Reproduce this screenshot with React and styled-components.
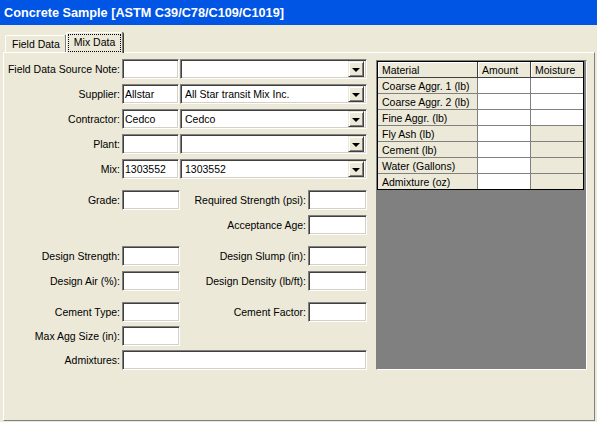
import React from "react";
import styled, { createGlobalStyle } from "styled-components";

const GlobalStyle = createGlobalStyle`
  html, body {
    margin: 0;
    padding: 0;
    background: #ece9d8;
  }
  body {
    font-family: "Liberation Sans", Arial, sans-serif;
    font-size: 10.5px;
    color: #000;
  }
  * {
    box-sizing: border-box;
  }
`;

const Window = styled.div`
  width: 597px;
  height: 422px;
  display: flex;
  flex-direction: column;
  background: #ece9d8;
  overflow: hidden;
`;

const TitleBar = styled.div`
  flex: none;
  height: 25px;
  display: flex;
  align-items: center;
  padding-left: 4px;
  background: #0055e5;
  color: #fff;
  font-size: 12.7px;
  font-weight: bold;
`;

const Body = styled.div`
  flex: 1;
  display: flex;
  flex-direction: column;
  padding: 7px 2px 1px 3px;
`;

const TabStrip = styled.div`
  flex: none;
  height: 20px;
  display: flex;
  align-items: flex-end;
  padding-left: 2px;
`;

const Tab = styled.div`
  position: relative;
  height: ${(p) => (p.$active ? "21px" : "17px")};
  margin-bottom: ${(p) => (p.$active ? "-1px" : "0")};
  z-index: ${(p) => (p.$active ? 1 : 0)};
  display: flex;
  align-items: ${(p) => (p.$active ? "flex-start" : "center")};
  padding: ${(p) => (p.$active ? "1px 1px 0 1px" : "0 5px 0 6px")};
  background: #ece9d8;
  border-top: 1px solid #fff;
  border-left: 1px solid #fff;
  border-right: 1px solid #808080;
  border-radius: 2px 2px 0 0;
  box-shadow: 1px 0 0 #404040;
`;

const FocusLabel = styled.span`
  border: 1px dotted #000;
  padding: 1px 5px 2px 5px;
  line-height: 13px;
`;

const Panel = styled.div`
  flex: 1;
  display: flex;
  gap: 8px;
  padding: 6px 7px 0 1px;
  border-top: 1px solid #fff;
  border-left: 1px solid #fff;
  border-right: 1px solid #808080;
  border-bottom: 1px solid #808080;
`;

const Form = styled.div`
  width: 363px;
  display: flex;
  flex-direction: column;
`;

const TopRows = styled.div`
  display: grid;
  grid-template-columns: 116px 57px 187px;
  grid-auto-rows: 20px;
  column-gap: 1px;
  row-gap: 5px;
`;

const Section = styled.div`
  display: grid;
  grid-template-columns: 116px 58px 126px 59px;
  grid-auto-rows: 20px;
  column-gap: 1px;
  row-gap: ${(p) => p.$gap || 5}px;
  margin-top: 11px;
`;

const Label = styled.div`
  display: flex;
  align-items: center;
  justify-content: flex-end;
  padding-right: 1px;
  white-space: nowrap;
  grid-column: ${(p) => p.$col || "auto"};
`;

const Input = styled.div`
  grid-column: ${(p) => p.$span || "auto"};
  height: 20px;
  display: flex;
  align-items: center;
  padding-left: 2px;
  background: #fff;
  border-top: 1px solid #808080;
  border-left: 1px solid #808080;
  border-bottom: 1px solid #fff;
  border-right: 1px solid #fff;
  box-shadow: inset 1px 1px 0 #404040, inset -1px -1px 0 #d4d0c8;
  white-space: nowrap;
  overflow: hidden;
`;

const Combo = styled(Input)`
  padding: 2px;
  padding-left: 4px;
  justify-content: space-between;
`;

const DropButton = styled.div`
  flex: none;
  width: 16px;
  height: 16px;
  display: flex;
  align-items: center;
  justify-content: center;
  background: #ece9d8;
  border-top: 1px solid #ece9d8;
  border-left: 1px solid #ece9d8;
  border-right: 1px solid #404040;
  border-bottom: 1px solid #404040;
  box-shadow: inset 1px 1px 0 #fff, inset -1px -1px 0 #808080;
`;

const Arrow = styled.span`
  width: 0;
  height: 0;
  border-left: 4px solid transparent;
  border-right: 4px solid transparent;
  border-top: 4px solid #000;
  margin-top: 1px;
`;

const GridFrame = styled.div`
  width: 211px;
  height: 310px;
  margin-top: 1px;
  background: #808080;
  border-top: 1px solid #808080;
  border-left: 1px solid #808080;
  border-right: 1px solid #fff;
  border-bottom: 1px solid #fff;
`;

const Table = styled.div`
  width: 207px;
  display: grid;
  grid-template-columns: 100px 53px 52px;
  border: 1px solid #000;
`;

const Cell = styled.div`
  height: ${(p) => (p.$last ? "15px" : "16px")};
  display: flex;
  align-items: center;
  padding-left: 4px;
  white-space: nowrap;
  overflow: hidden;
  background: ${(p) => (p.$white ? "#fff" : "#ece9d8")};
  border-right: ${(p) => (p.$end ? "none" : "1px solid #808080")};
  border-bottom: ${(p) => (p.$last ? "none" : "1px solid #808080")};
`;

const HeadCell = styled(Cell)`
  border-right: ${(p) => (p.$end ? "none" : "1px solid #404040")};
  border-bottom: 1px solid #404040;
  box-shadow: inset 1px 1px 0 #fff;
`;

const topFields = [
  { label: "Field Data Source Note:", code: "", name: "" },
  { label: "Supplier:", code: "Allstar", name: "All Star transit Mix Inc." },
  { label: "Contractor:", code: "Cedco", name: "Cedco" },
  { label: "Plant:", code: "", name: "" },
  { label: "Mix:", code: "1303552", name: "1303552" },
];

const materials = [
  { name: "Coarse Aggr. 1 (lb)", moisture: true },
  { name: "Coarse Aggr. 2 (lb)", moisture: true },
  { name: "Fine Aggr. (lb)", moisture: true },
  { name: "Fly Ash (lb)", moisture: false },
  { name: "Cement (lb)", moisture: false },
  { name: "Water (Gallons)", moisture: false },
  { name: "Admixture (oz)", moisture: false },
];

const App = () => {
  return (
    <>
      <GlobalStyle />
      <Window>
        <TitleBar>Concrete Sample [ASTM C39/C78/C109/C1019]</TitleBar>
        <Body>
          <TabStrip>
            <Tab>Field Data</Tab>
            <Tab $active>
              <FocusLabel>Mix Data</FocusLabel>
            </Tab>
          </TabStrip>
          <Panel>
            <Form>
              <TopRows>
                {topFields.map((f) => (
                  <React.Fragment key={f.label}>
                    <Label>{f.label}</Label>
                    <Input>{f.code}</Input>
                    <Combo>
                      <span>{f.name}</span>
                      <DropButton>
                        <Arrow />
                      </DropButton>
                    </Combo>
                  </React.Fragment>
                ))}
              </TopRows>

              <Section>
                <Label>Grade:</Label>
                <Input />
                <Label>Required Strength (psi):</Label>
                <Input />
                <Label $col="3">Acceptance Age:</Label>
                <Input />
              </Section>

              <Section>
                <Label>Design Strength:</Label>
                <Input />
                <Label>Design Slump (in):</Label>
                <Input />
                <Label>Design Air (%):</Label>
                <Input />
                <Label>Design Density (lb/ft):</Label>
                <Input />
              </Section>

              <Section $gap={4}>
                <Label>Cement Type:</Label>
                <Input />
                <Label>Cement Factor:</Label>
                <Input />
                <Label>Max Agg Size (in):</Label>
                <Input />
                <Label $col="1">Admixtures:</Label>
                <Input $span="2 / 5" />
              </Section>
            </Form>

            <GridFrame>
              <Table>
                <HeadCell>Material</HeadCell>
                <HeadCell>Amount</HeadCell>
                <HeadCell $end>Moisture</HeadCell>
                {materials.map((m, i) => {
                  const last = i === materials.length - 1;
                  return (
                    <React.Fragment key={m.name}>
                      <Cell $last={last}>{m.name}</Cell>
                      <Cell $last={last} $white />
                      <Cell $last={last} $end $white={m.moisture} />
                    </React.Fragment>
                  );
                })}
              </Table>
            </GridFrame>
          </Panel>
        </Body>
      </Window>
    </>
  );
};

export default App;
